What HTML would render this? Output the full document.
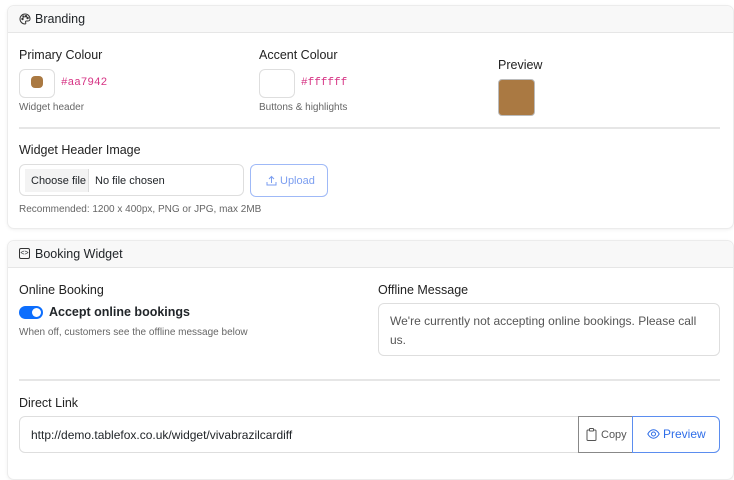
<!DOCTYPE html>
<html><head><meta charset="utf-8"><style>
*{box-sizing:border-box;margin:0;padding:0}
body{width:734px;height:463px;background:#fff;font-family:"Liberation Sans",sans-serif;color:#212529;position:relative;overflow:hidden;font-size:12px}
.a{position:absolute;white-space:nowrap}
.card{position:absolute;left:7px;width:727px;border:1px solid #ececec;border-radius:7px;background:#fff;box-shadow:0 1px 3px rgba(0,0,0,.06)}
.hd{position:absolute;left:0;right:0;top:0;height:27px;background:#f8f8f8;border-bottom:1px solid #e6e6e6;border-radius:7px 7px 0 0}
.lbl{font-size:12.5px;color:#222}
.sm{font-size:10px;color:#666}
.box{position:absolute;border:1px solid #dedede;border-radius:6px;background:#fff}
.mono{font-family:"Liberation Mono",monospace;color:#d63384;font-size:11px}
.hr{position:absolute;height:2px;background:#e6e6e6}
</style></head><body>
<div class="card" style="top:5px;height:224px">
<div class="hd"></div>
</div>
<svg class="a" style="left:19px;top:13px" width="12" height="12" viewBox="0 0 12 12" fill="none" stroke="#333" stroke-width="1"><path d="M6 1a5 5 0 1 0 0 10c1 0 1-1 .6-1.6-.4-.6 0-1.4.8-1.4H9a2 2 0 0 0 2-2C11 3 8.8 1 6 1z"/><circle cx="3.5" cy="6" r=".7" fill="#333"/><circle cx="4.5" cy="3.6" r=".7" fill="#333"/><circle cx="7" cy="3.2" r=".7" fill="#333"/><circle cx="8.6" cy="5" r=".7" fill="#333"/></svg>
<div class="a" style="left:35px;top:12px;font-size:12.5px">Branding</div>

<div class="a lbl" style="left:19px;top:48px">Primary Colour</div>
<div class="box" style="left:19px;top:69px;width:36px;height:29px"></div>
<div class="a" style="left:31px;top:76px;width:12px;height:12px;border-radius:4px;background:#aa7942"></div>
<div class="a mono" style="left:61px;top:77px">#aa7942</div>
<div class="a sm" style="left:19px;top:102px">Widget header</div>

<div class="a lbl" style="left:259px;top:48px">Accent Colour</div>
<div class="box" style="left:259px;top:69px;width:36px;height:29px"></div>
<div class="a mono" style="left:301px;top:77px">#ffffff</div>
<div class="a sm" style="left:259px;top:102px">Buttons &amp; highlights</div>

<div class="a lbl" style="left:498px;top:58px">Preview</div>
<div class="a" style="left:498px;top:79px;width:37px;height:37px;border-radius:4px;background:#aa7942;border:1px solid #bbb"></div>

<div class="hr" style="left:19px;top:127px;width:701px"></div>

<div class="a lbl" style="left:19px;top:143px">Widget Header Image</div>
<div class="box" style="left:19px;top:164px;width:225px;height:32px"></div>
<div class="a" style="left:25px;top:169px;width:64px;height:23px;background:#f3f3f3;border-right:1px solid #ddd"></div>
<div class="a" style="left:31px;top:175px;font-size:11px">Choose file</div>
<div class="a" style="left:95px;top:175px;font-size:11px">No file chosen</div>
<div class="box" style="left:250px;top:164px;width:78px;height:33px;border-color:#9fb9f7"></div>
<svg class="a" style="left:266px;top:175px" width="11" height="11" viewBox="0 0 11 11" fill="none" stroke="#7b9ef0" stroke-width="1"><path d="M1 7v3h9V7M5.5 8V1.5M3 4l2.5-2.5L8 4"/></svg>
<div class="a" style="left:280px;top:175px;font-size:11px;color:#7b9ef0">Upload</div>
<div class="a sm" style="left:19px;top:204px">Recommended: 1200 x 400px, PNG or JPG, max 2MB</div>

<div class="card" style="top:240px;height:240px">
<div class="hd"></div>
</div>
<div class="a" style="left:19px;top:248px;width:11px;height:11px;border:1px solid #333;border-radius:2px;font-size:7px;line-height:9px;text-align:center">&lt;&gt;</div>
<div class="a" style="left:35px;top:247px;font-size:12.5px">Booking Widget</div>

<div class="a lbl" style="left:19px;top:283px">Online Booking</div>
<div class="a" style="left:19px;top:306px;width:24px;height:13px;border-radius:7px;background:#0d6efd"></div>
<div class="a" style="left:32px;top:308px;width:9px;height:9px;border-radius:50%;background:#fff"></div>
<div class="a" style="left:49px;top:305px;font-size:12.5px;font-weight:bold">Accept online bookings</div>
<div class="a sm" style="left:19px;top:327px">When off, customers see the offline message below</div>

<div class="a lbl" style="left:378px;top:283px">Offline Message</div>
<div class="box" style="left:378px;top:303px;width:342px;height:53px"></div>
<div class="a" style="left:390px;top:312px;font-size:12px;color:#555;line-height:19px">We're currently not accepting online bookings. Please call<br>us.</div>

<div class="hr" style="left:19px;top:379px;width:701px"></div>

<div class="a lbl" style="left:19px;top:396px">Direct Link</div>
<div class="box" style="left:19px;top:416px;width:560px;height:37px;border-radius:6px 0 0 6px"></div>
<div class="a" style="left:31px;top:428px;font-size:12px">http://demo.tablefox.co.uk/widget/vivabrazilcardiff</div>
<div class="a" style="left:578px;top:416px;width:55px;height:37px;border:1px solid #888;background:#fff"></div>
<svg class="a" style="left:586px;top:428px" width="11" height="13" viewBox="0 0 11 13" fill="none" stroke="#555" stroke-width="1"><rect x="1" y="2" width="9" height="10.5" rx="1"/><rect x="3.5" y=".5" width="4" height="2.5" rx=".5" fill="#fff"/></svg>
<div class="a" style="left:601px;top:429px;font-size:11px;color:#555">Copy</div>
<div class="a" style="left:632px;top:416px;width:88px;height:37px;border:1px solid #5b8def;border-radius:0 6px 6px 0;background:#fff"></div>
<svg class="a" style="left:647px;top:429px" width="13" height="10" viewBox="0 0 13 10" fill="none" stroke="#2f6ee8" stroke-width="1"><path d="M.8 5C2.5 2 4.5.8 6.5.8S10.5 2 12.2 5C10.5 8 8.5 9.2 6.5 9.2S2.5 8 .8 5z"/><circle cx="6.5" cy="5" r="2"/></svg>
<div class="a" style="left:663px;top:427px;font-size:12px;color:#2f6ee8">Preview</div>
</body></html>
